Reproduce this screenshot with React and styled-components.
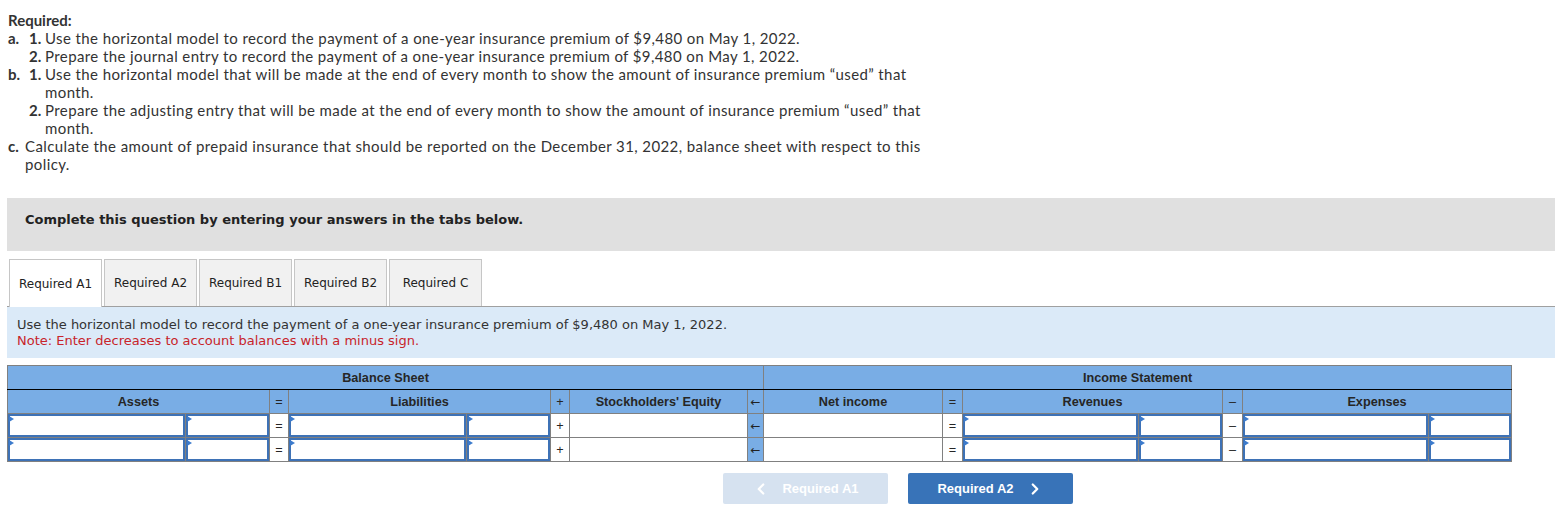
import React from "react";
import styled, { createGlobalStyle } from "styled-components";
import { ChevronLeft, ChevronRight } from "lucide-react";

const GlobalStyle = createGlobalStyle`
  body {
    margin: 0;
    background: #fff;
  }
`;

const Page = styled.div`
  width: 1555px;
  box-sizing: border-box;
  padding: 11px 0 0 7px;
  overflow: hidden;
`;

const Required = styled.div`
  font-family: Lato, "Open Sans", sans-serif;
  font-size: 15px;
  letter-spacing: 0.4px;
  line-height: 18px;
  color: #333;
  padding-left: 1px;
`;

const Title = styled.div`
  font-weight: 700;
  letter-spacing: 0;
`;

const Part = styled.div`
  display: flex;
`;

const Label = styled.span`
  flex: 0 0 ${props => props.width}px;
  font-weight: 700;
  letter-spacing: 0;
`;

const Steps = styled.div`
  flex: 1;
`;

const Step = styled.div`
  display: flex;
`;

const Text = styled.span`
  white-space: nowrap;
`;

const GrayBox = styled.div`
  margin-top: 25px;
  height: 53px;
  box-sizing: border-box;
  background: #e0e0e0;
  padding: 14px 0 0 18px;
  font-family: "DejaVu Sans", Verdana, sans-serif;
  font-size: 13px;
  line-height: 16px;
  font-weight: 700;
  color: #222;
`;

const TabBar = styled.div`
  margin-top: 8px;
  display: flex;
  gap: 2px;
  padding-left: 2px;
  border-bottom: 1px solid #a0a0a0;
  height: 47px;
`;

const Tab = styled.div`
  width: 93px;
  height: ${props => (props.active ? 48 : 47)}px;
  box-sizing: border-box;
  border: 1px solid #c6c6c6;
  border-bottom: none;
  background: ${props => (props.active ? "#fff" : "#f1f1f1")};
  display: flex;
  align-items: center;
  justify-content: center;
  font-family: "DejaVu Sans", Verdana, sans-serif;
  font-size: 12px;
  color: #222;
`;

const Instructions = styled.div`
  height: 51px;
  box-sizing: border-box;
  background: #dbeaf8;
  padding: 10px 0 0 10px;
  font-family: "DejaVu Sans", Verdana, sans-serif;
  font-size: 13px;
  line-height: 16px;
  color: #333;
`;

const Note = styled.div`
  color: #c8242a;
`;

const Table = styled.table`
  margin-top: 7px;
  width: 1505px;
  table-layout: fixed;
  border-collapse: collapse;
  border: 1px solid #808080;
  font-family: "Liberation Sans", Arial, sans-serif;
  font-size: 12.7px;
  color: #333;
`;

const Head = styled.th`
  background: #79ade5;
  height: 23px;
  padding: 0;
  border: 1px solid #808080;
  border-bottom-color: ${props => (props.top ? "#000" : "#808080")};
  font-weight: ${props => (props.symbol ? 400 : 700)};
  text-align: center;
  color: #262626;
`;

const Cell = styled.td`
  height: 23px;
  padding: 0;
  border: 1px solid #808080;
  text-align: center;
  color: #262626;
  background: ${props => (props.arrow ? "#79ade5" : "#fff")};
`;

const Arrow = styled.span`
  font-family: "DejaVu Sans", sans-serif;
  font-size: 12px;
  color: #222;
`;

const InputBox = styled.div`
  position: relative;
  height: 23px;
  box-sizing: border-box;
  border: 2px solid #3e72b6;
  background: #fff;
  &::before {
    content: "";
    position: absolute;
    left: -1px;
    top: 0;
    border-left: 5px solid #3c7bcc;
    border-top: 3px solid transparent;
    border-bottom: 3px solid transparent;
  }
`;

const Nav = styled.div`
  margin-top: 11px;
  padding-left: 716px;
  display: flex;
  gap: 20px;
`;

const NavButton = styled.div`
  width: 165px;
  height: 31px;
  border-radius: 2px;
  background: ${props => (props.disabled ? "#d6e2f0" : "#3873b8")};
  color: #fff;
  display: flex;
  align-items: center;
  justify-content: center;
  gap: 12px;
  font-family: "Liberation Sans", Arial, sans-serif;
  font-size: 13px;
  font-weight: 700;
`;

const columns = [
  { w: 178, kind: "in" },
  { w: 84, kind: "in" },
  { w: 19, kind: "sym", s: "=" },
  { w: 178, kind: "in" },
  { w: 84, kind: "in" },
  { w: 19, kind: "sym", s: "+" },
  { w: 178, kind: "plain" },
  { w: 16, kind: "arrow" },
  { w: 179, kind: "plain" },
  { w: 20, kind: "sym", s: "=" },
  { w: 176, kind: "in" },
  { w: 84, kind: "in" },
  { w: 20, kind: "sym", s: "–" },
  { w: 186, kind: "in" },
  { w: 83, kind: "in" },
];

const headers = [
  { t: "Assets", span: 2 },
  { t: "=", symbol: true },
  { t: "Liabilities", span: 2 },
  { t: "+", symbol: true },
  { t: "Stockholders' Equity" },
  { t: <Arrow>←</Arrow>, symbol: true },
  { t: "Net income" },
  { t: "=", symbol: true },
  { t: "Revenues", span: 2 },
  { t: "–", symbol: true },
  { t: "Expenses", span: 2 },
];

const tabs = ["Required A1", "Required A2", "Required B1", "Required B2", "Required C"];

const Row = () => (
  <tr>
    {columns.map((c, i) => (
      <Cell key={i} arrow={c.kind === "arrow"}>
        {c.kind === "in" && <InputBox />}
        {c.kind === "sym" && c.s}
        {c.kind === "arrow" && <Arrow>←</Arrow>}
      </Cell>
    ))}
  </tr>
);

export default function App() {
  return (
    <Page>
      <GlobalStyle />
      <Required>
        <Title>Required:</Title>
        <Part>
          <Label width={21}>a.</Label>
          <Steps>
            <Step>
              <Label width={16}>1.</Label>
              <Text>Use the horizontal model to record the payment of a one-year insurance premium of $9,480 on May 1, 2022.</Text>
            </Step>
            <Step>
              <Label width={16}>2.</Label>
              <Text>Prepare the journal entry to record the payment of a one-year insurance premium of $9,480 on May 1, 2022.</Text>
            </Step>
          </Steps>
        </Part>
        <Part>
          <Label width={21}>b.</Label>
          <Steps>
            <Step>
              <Label width={16}>1.</Label>
              <Text>
                Use the horizontal model that will be made at the end of every month to show the amount of insurance premium “used” that
                <br />
                month.
              </Text>
            </Step>
            <Step>
              <Label width={16}>2.</Label>
              <Text>
                Prepare the adjusting entry that will be made at the end of every month to show the amount of insurance premium “used” that
                <br />
                month.
              </Text>
            </Step>
          </Steps>
        </Part>
        <Part>
          <Label width={17}>c.</Label>
          <Text>
            Calculate the amount of prepaid insurance that should be reported on the December 31, 2022, balance sheet with respect to this
            <br />
            policy.
          </Text>
        </Part>
      </Required>

      <GrayBox>Complete this question by entering your answers in the tabs below.</GrayBox>

      <TabBar>
        {tabs.map((t, i) => (
          <Tab key={t} active={i === 0}>
            {t}
          </Tab>
        ))}
      </TabBar>

      <Instructions>
        <div>Use the horizontal model to record the payment of a one-year insurance premium of $9,480 on May 1, 2022.</div>
        <Note>Note: Enter decreases to account balances with a minus sign.</Note>
      </Instructions>

      <Table>
        <colgroup>
          {columns.map((c, i) => (
            <col key={i} style={{ width: c.w }} />
          ))}
        </colgroup>
        <thead>
          <tr>
            <Head top colSpan={8}>Balance Sheet</Head>
            <Head top colSpan={7}>Income Statement</Head>
          </tr>
          <tr>
            {headers.map((h, i) => (
              <Head key={i} colSpan={h.span || 1} symbol={h.symbol}>
                {h.t}
              </Head>
            ))}
          </tr>
        </thead>
        <tbody>
          <Row />
          <Row />
        </tbody>
      </Table>

      <Nav>
        <NavButton disabled>
          <ChevronLeft size={18} strokeWidth={3} />
          Required A1
        </NavButton>
        <NavButton>
          Required A2
          <ChevronRight size={18} strokeWidth={3} />
        </NavButton>
      </Nav>
    </Page>
  );
}
